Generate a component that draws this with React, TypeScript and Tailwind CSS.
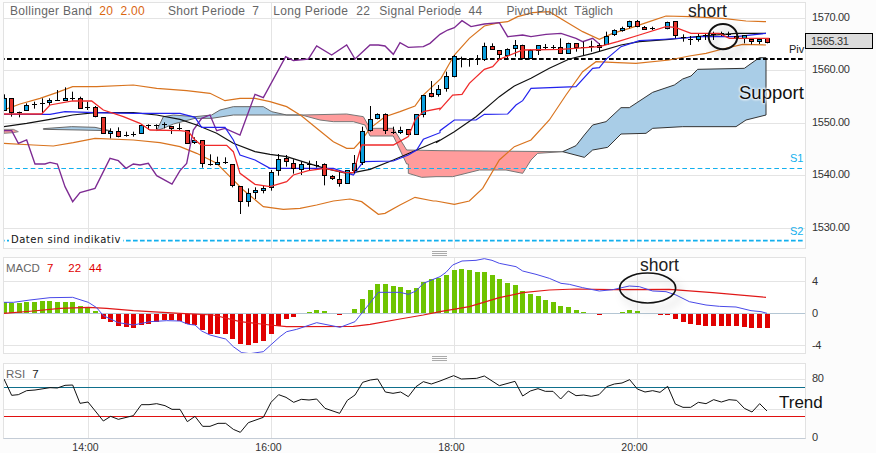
import React from "react";

const font = "font-['Liberation_Sans',Arial,sans-serif]";

// all chart coordinates are in 3x page pixels
type C = [string, number, number, number, number];

const candles: C[] = [
  ["b", 295, 330, 283, 332], ["r", 295, 338, 295, 350], ["d", 336, 336, 335, 352], ["b", 316, 332, 310, 332],
  ["d", 314, 314, 305, 326], ["d", 311, 311, 295, 340], ["b", 300, 308, 295, 315], ["d", 300, 300, 270, 302],
  ["b", 295, 302, 262, 302], ["d", 295, 295, 275, 302], ["r", 295, 325, 290, 325], ["d", 323, 323, 305, 330],
  ["r", 323, 349, 318, 352], ["r", 352, 400, 352, 400], ["b", 395, 400, 385, 415], ["r", 395, 410, 382, 412],
  ["d", 407, 407, 395, 410], ["d", 402, 402, 395, 410], ["b", 377, 400, 372, 402], ["d", 375, 375, 373, 390],
  ["d", 375, 375, 373, 388], ["d", 373, 373, 367, 385], ["r", 380, 386, 378, 402], ["d", 386, 386, 370, 390],
  ["r", 392, 430, 392, 432], ["b", 422, 428, 412, 432], ["r", 422, 490, 422, 503], ["d", 492, 492, 463, 497],
  ["b", 487, 493, 470, 495], ["d", 488, 488, 472, 492], ["r", 493, 556, 493, 562], ["r", 560, 605, 560, 642],
  ["b", 580, 604, 565, 620], ["b", 570, 577, 562, 597], ["b", 566, 572, 555, 580], ["b", 517, 563, 510, 572],
  ["b", 477, 511, 462, 527], ["r", 476, 485, 465, 500], ["r", 490, 505, 478, 521], ["b", 493, 507, 485, 525],
  ["d", 493, 493, 482, 512], ["d", 495, 495, 483, 503], ["r", 494, 526, 490, 556], ["r", 529, 535, 525, 540],
  ["r", 539, 550, 512, 560], ["b", 512, 550, 510, 552], ["b", 490, 510, 465, 520], ["b", 395, 487, 380, 495],
  ["b", 358, 392, 318, 395], ["b", 343, 356, 340, 358], ["r", 343, 392, 340, 402], ["d", 397, 397, 380, 402],
  ["b", 390, 397, 380, 402], ["r", 388, 403, 388, 405], ["b", 343, 403, 343, 403], ["b", 287, 343, 285, 352],
  ["r", 280, 290, 243, 292], ["b", 268, 284, 255, 290], ["b", 229, 265, 215, 275], ["b", 170, 228, 165, 232],
  ["d", 175, 175, 170, 202], ["d", 178, 178, 178, 200], ["d", 178, 178, 165, 195], ["b", 139, 177, 128, 183],
  ["r", 139, 149, 130, 150], ["r", 152, 163, 150, 180], ["b", 148, 167, 145, 178], ["b", 136, 146, 120, 170],
  ["r", 136, 176, 134, 177], ["b", 151, 176, 148, 177], ["b", 136, 150, 136, 165], ["d", 142, 142, 132, 150],
  ["d", 141, 141, 135, 147], ["r", 142, 160, 115, 162], ["b", 130, 161, 128, 162], ["r", 131, 143, 130, 155],
  ["d", 142, 142, 125, 165], ["d", 139, 139, 122, 155], ["b", 136, 142, 130, 155], ["b", 108, 134, 95, 135],
  ["b", 91, 103, 88, 108], ["b", 86, 92, 80, 95], ["b", 64, 80, 62, 85], ["r", 64, 79, 60, 82],
  ["r", 82, 88, 78, 90], ["d", 86, 86, 80, 90], ["", 0, 0, 0, 0], ["b", 68, 85, 65, 88],
  ["r", 64, 106, 64, 115], ["d", 113, 113, 103, 125], ["d", 117, 117, 108, 135], ["b", 110, 118, 100, 125],
  ["d", 106, 106, 100, 120], ["d", 102, 102, 95, 120], ["d", 101, 101, 95, 108], ["d", 102, 102, 95, 110],
  ["r", 110, 116, 108, 122], ["b", 107, 116, 105, 130], ["r", 118, 124, 115, 133], ["b", 117, 124, 114, 132],
  ["r", 116, 127, 114, 130],
];

const macdBars = [
  173, 175, 175, 172, 171, 170, 168, 171, 172, 173, 183, 190, 200, 222, 233, 243, 248, 250, 242, 237, 232, 227, 226,
  228, 237, 240, 255, 267, 268, 268, 282, 298, 300, 296, 288, 267, 243, 224, 216, 208, 202, 197, 200, 205, 210, 205,
  193, 162, 136, 117, 119, 124, 127, 135, 129, 113, 103, 100, 92, 75, 72, 75, 81, 81, 90, 103, 114, 120, 138, 149, 155,
  165, 172, 185, 188, 196, 201, 204, 211, 207, 204, 201, 195, 198, 204, 208, 212, 212, 222, 232, 239, 242, 244, 244,
  244, 244, 244, 246, 249, 249, 251,
];

// snap to the middle of a page pixel so 1px strokes stay crisp
const snap = (v: number) => Math.round((v - 1.5) / 3) * 3 + 1.5;
const cx = (i: number) => snap(12 + i * 22.89);

// left half is in the 0-based crop, right half is offset by 1308
const line = (a: number[], b: number[] = [], dy = 0) => {
  const out: string[] = [];
  for (let i = 0; i < a.length; i += 2) out.push(`${a[i]},${a[i + 1] + dy}`);
  for (let i = 0; i < b.length; i += 2) out.push(`${b[i] + 1308},${b[i + 1] + dy}`);
  return out.join(" ");
};

const upper = line(
  [12, 330, 60, 312, 120, 295, 170, 278, 218, 260, 290, 260, 400, 255, 470, 265, 560, 272, 630, 280, 675, 302, 720, 295, 765, 295, 810, 305, 860, 320, 905, 348, 950, 385, 1000, 425, 1040, 445, 1062, 445, 1085, 420, 1110, 385, 1155, 350, 1200, 335, 1245, 318, 1265, 290],
  [15, 235, 55, 165, 100, 115, 145, 78, 190, 68, 215, 65, 245, 50, 290, 38, 340, 35, 390, 65, 440, 95, 490, 118, 530, 100, 580, 85, 640, 65, 690, 48, 760, 50, 860, 55, 930, 63, 990, 65],
);
const lower = line(
  [12, 430, 100, 435, 160, 438, 220, 428, 285, 415, 400, 420, 480, 428, 540, 440, 590, 460, 650, 490, 695, 535, 730, 570, 790, 620, 850, 628, 900, 625, 950, 615, 1000, 603, 1050, 597, 1085, 605, 1135, 643, 1155, 640, 1200, 615, 1245, 592, 1300, 603],
  [0, 603, 55, 613, 100, 603, 140, 565, 190, 480, 235, 440, 285, 420, 340, 360, 390, 285, 440, 215, 480, 185, 545, 188, 600, 190, 700, 180, 760, 168, 810, 160, 860, 147, 920, 133, 990, 135],
);
const redLine = line(
  [12, 342, 125, 342, 150, 315, 218, 303, 275, 303, 310, 330, 370, 350, 420, 370, 450, 390, 540, 392, 565, 395, 585, 420, 605, 436, 680, 436, 700, 455, 720, 520, 765, 553, 810, 560, 860, 545, 880, 525, 925, 512, 975, 505, 1035, 518, 1060, 518, 1085, 435, 1180, 435, 1225, 410, 1245, 360, 1270, 335, 1320, 325],
  [12, 328, 50, 285, 78, 283, 100, 250, 145, 208, 170, 200, 190, 178, 260, 150, 375, 148, 490, 140, 545, 125, 610, 105, 690, 80, 718, 82, 765, 100, 850, 100, 880, 115, 925, 115, 1000, 115],
);
const blueLine = line(
  [12, 343, 150, 343, 195, 335, 285, 338, 400, 340, 540, 340, 585, 352, 605, 382, 675, 382, 700, 420, 720, 465, 765, 480, 810, 505, 1000, 505, 1060, 525, 1090, 485, 1180, 483, 1225, 465, 1250, 450, 1270, 418, 1320, 398],
  [12, 392, 55, 360, 120, 360, 145, 343, 215, 342, 240, 315, 260, 302, 285, 265, 420, 260, 470, 205, 490, 203, 510, 178, 555, 140, 610, 122, 700, 117, 800, 110, 900, 110, 990, 100],
);
const blackLine = line(
  [12, 380, 80, 370, 150, 358, 218, 345, 285, 338, 400, 338, 470, 345, 540, 358, 590, 375, 650, 400, 700, 430, 765, 455, 810, 463, 860, 470, 925, 490, 975, 505, 1040, 520, 1060, 518, 1110, 508, 1180, 480, 1250, 450, 1320, 420],
  [0, 428, 55, 395, 120, 350, 190, 290, 235, 258, 285, 235, 340, 205, 400, 177, 470, 160, 555, 135, 610, 125, 700, 118, 800, 108, 900, 100, 990, 100],
);
const purple = line(
  [12, 392, 35, 392, 55, 430, 80, 420, 105, 492, 135, 492, 150, 487, 172, 492, 195, 560, 218, 605, 240, 578, 285, 565, 330, 475, 355, 482, 378, 505, 400, 492, 420, 495, 445, 490, 470, 527, 516, 552, 540, 512, 560, 490, 580, 390, 605, 355, 630, 345, 650, 392, 675, 385, 720, 405, 765, 283, 790, 293, 857, 170, 880, 182, 925, 177, 950, 138, 995, 165, 1040, 135, 1065, 177, 1110, 135, 1135, 135, 1155, 138, 1180, 163, 1200, 128, 1225, 142, 1270, 140, 1290, 130, 1320, 103],
  [35, 90, 55, 83, 78, 62, 105, 80, 145, 72, 190, 68, 215, 110, 260, 105, 285, 110, 330, 103, 375, 100, 420, 115, 440, 125, 470, 115, 490, 132],
);

const cloudRed1 = line([12, 388, 40, 388, 55, 395, 40, 398, 12, 400]);
const cloudBlue1 = line([130, 386, 215, 380, 285, 382, 330, 392, 240, 390, 130, 388]);
const cloudBlue2 = line([470, 392, 490, 350, 520, 345, 585, 350, 635, 345, 660, 330, 700, 320, 790, 320, 815, 335, 860, 345, 905, 345, 700, 345, 635, 355, 585, 355, 520, 372, 490, 385]);
const cloudRed2 = line(
  [905, 345, 1040, 342, 1090, 350, 1110, 385, 1180, 385, 1220, 450, 1320, 452],
  [380, 455, 305, 460, 285, 480, 260, 520, 210, 510, 130, 510, 50, 530, 0, 530, -43, 532, -83, 520, -83, 492, -88, 492, -128, 408, -198, 408, -213, 375, -248, 365, -308, 365, -348, 360],
);
const cloudBig = line([], [380, 455, 420, 437, 445, 405, 470, 375, 510, 365, 555, 323, 580, 323, 650, 277, 715, 255, 740, 237, 765, 228, 785, 208, 925, 205, 970, 173, 990, 173, 990, 345, 930, 360, 900, 380, 740, 380, 650, 385, 630, 400, 555, 402, 515, 442, 470, 450, 445, 472]);

const macdBlue = line(
  [12, 172, 40, 172, 90, 165, 150, 158, 218, 157, 265, 172, 290, 188, 310, 212, 355, 233, 400, 240, 450, 230, 500, 227, 540, 228, 565, 238, 585, 240, 605, 258, 630, 270, 677, 282, 700, 305, 725, 323, 750, 326, 790, 320, 840, 275, 860, 260, 890, 253, 950, 233, 1020, 247, 1065, 230, 1105, 180, 1135, 142, 1200, 142, 1225, 148, 1248, 138, 1270, 115, 1320, 95],
  [30, 82, 50, 60, 78, 48, 120, 46, 145, 41, 168, 46, 190, 55, 240, 65, 260, 78, 300, 88, 340, 100, 375, 115, 400, 118, 440, 128, 490, 138, 530, 134, 580, 123, 610, 125, 650, 138, 690, 140, 720, 150, 760, 170, 810, 180, 850, 184, 900, 186, 945, 197, 975, 200, 993, 205],
  735,
);
const macdRed = line(
  [12, 205, 100, 198, 180, 190, 265, 187, 320, 190, 400, 197, 540, 205, 640, 210, 720, 230, 810, 240, 860, 245, 1060, 244, 1110, 238, 1200, 222, 1270, 210, 1320, 200],
  [100, 185, 190, 158, 260, 143, 340, 135, 420, 132, 530, 134, 700, 133, 830, 143, 990, 157],
  735,
);
const rsi = line(
  [12, 402, 35, 451, 55, 449, 80, 437, 105, 435, 150, 428, 172, 429, 195, 421, 218, 420, 240, 475, 264, 471, 310, 528, 332, 514, 355, 523, 400, 512, 424, 479, 447, 479, 470, 476, 495, 482, 516, 493, 540, 493, 562, 530, 585, 514, 608, 544, 630, 544, 654, 535, 677, 535, 700, 553, 721, 562, 745, 533, 790, 517, 813, 472, 836, 449, 858, 457, 881, 472, 904, 463, 927, 465, 950, 462, 975, 490, 1019, 505, 1042, 466, 1065, 450, 1088, 412, 1111, 405, 1133, 402, 1156, 441, 1179, 445, 1202, 441, 1225, 455, 1248, 425, 1270, 410, 1294, 417, 1320, 408],
  [53, 392, 76, 402, 122, 400, 145, 393, 190, 422, 237, 409, 260, 453, 283, 438, 306, 431, 328, 439, 351, 439, 374, 462, 397, 438, 420, 452, 443, 450, 466, 454, 489, 449, 512, 425, 535, 417, 558, 414, 581, 404, 604, 432, 627, 441, 650, 437, 672, 442, 695, 424, 718, 477, 741, 487, 764, 487, 787, 472, 810, 476, 833, 464, 856, 471, 879, 464, 902, 466, 925, 490, 948, 501, 971, 476, 993, 498],
  735,
);

const verticals = [265.5, 814.5, 1363.5, 1912.5];
const Grid = ({ ys, y1, y2 }: { ys: number[]; y1: number; y2: number }) => (
  <>
    {ys.map((y) => (
      <line key={y} x1={0} x2={2418} y1={y} y2={y} stroke="#e4e4e4" strokeWidth={3} />
    ))}
    {verticals.map((x) => (
      <line key={x} x1={x} x2={x} y1={y1} y2={y2} stroke="#e4e4e4" strokeWidth={3} />
    ))}
  </>
);

function Candles() {
  return (
    <g>
      {candles.map(([t, top, bottom, wt, wb], i) => {
        if (!t) return null;
        const x = cx(i);
        const y = snap(top);
        return (
          <g key={i}>
            <line x1={x} x2={x} y1={wt} y2={wb} stroke="#000" strokeWidth={3} />
            {t === "d" ? (
              <line x1={x - 7.5} x2={x + 7.5} y1={y} y2={y} stroke="#000" strokeWidth={3} />
            ) : (
              <rect
                x={x - 6}
                y={y}
                width={12}
                height={Math.max(snap(bottom) - y, 3)}
                fill={t === "b" ? "#0a9ede" : "#e5332a"}
                stroke="#000"
                strokeWidth={3}
              />
            )}
          </g>
        );
      })}
    </g>
  );
}

function PriceChart() {
  return (
    <svg viewBox="12 9 2403 735" className="block w-full h-full">
      <Grid ys={[55.5, 211.5, 370.5, 526.5, 685.5]} y1={9} y2={744} />
      <polygon points={cloudRed1} fill="#f79a9a" stroke="#888" strokeWidth={3} />
      <polygon points={cloudBlue1} fill="#a9cde7" stroke="#666" strokeWidth={3} />
      <polygon points={cloudBlue2} fill="#a9cde7" stroke="#666" strokeWidth={3} />
      <polygon points={cloudRed2} fill="#ff9c9c" stroke="#777" strokeWidth={3} />
      <polygon points={cloudBig} fill="#a9cde7" stroke="#333" strokeWidth={3} />
      <line x1={0} x2={2415} y1={177} y2={177} stroke="#000" strokeWidth={6} strokeDasharray="14 7" />
      <line x1={0} x2={2415} y1={505.5} y2={505.5} stroke="#12b0ee" strokeWidth={3} strokeDasharray="14 9" />
      <line x1={0} x2={2415} y1={722} y2={722} stroke="#12b0ee" strokeWidth={5} strokeDasharray="14 7" />
      <polyline points={upper} fill="none" stroke="#d9741f" strokeWidth={3.6} />
      <polyline points={lower} fill="none" stroke="#d9741f" strokeWidth={3.6} />
      <polyline points={purple} fill="none" stroke="#7d2a92" strokeWidth={4} />
      <polyline points={blackLine} fill="none" stroke="#111" strokeWidth={3.5} />
      <polyline points={blueLine} fill="none" stroke="#2222ee" strokeWidth={3.5} />
      <Candles />
      <polyline points={redLine} fill="none" stroke="#f02a2a" strokeWidth={3.8} />
      <ellipse cx={2169} cy={110} rx={43} ry={38} fill="none" stroke="#111" strokeWidth={6} className="drop-shadow-[15px_18px_12px_rgba(0,0,0,0.3)]" />
    </svg>
  );
}

function MacdChart() {
  return (
    <svg viewBox="12 774 2403 285" className="block w-full h-full">
      <Grid ys={[844.5, 1036.5]} y1={774} y2={1059} />
      <line x1={0} x2={2418} y1={940.5} y2={940.5} stroke="#b4c6d4" strokeWidth={3} />
      {macdBars.map((top, i) => {
        const y = snap(top + 735) - 1.5;
        const up = y < 940;
        return (
          <rect
            key={i}
            x={cx(i) - 7.5}
            y={up ? y : 942}
            width={15}
            height={up ? 939 - y : Math.max(y - 942, 0)}
            fill={up ? "#6fc400" : "#e00000"}
          />
        );
      })}
      <polyline points={macdRed} fill="none" stroke="#e01818" strokeWidth={3.5} />
      <polyline points={macdBlue} fill="none" stroke="#4a4ae8" strokeWidth={3} />
      <ellipse cx={1943} cy={864} rx={84} ry={45} fill="none" stroke="#111" strokeWidth={5} className="drop-shadow-[15px_18px_12px_rgba(0,0,0,0.25)]" />
    </svg>
  );
}

function RsiChart() {
  return (
    <svg viewBox="12 1092 2403 222" className="block w-full h-full">
      <Grid ys={[1138.5, 1228.5]} y1={1092} y2={1314} />
      <line x1={0} x2={2418} y1={1162.5} y2={1162.5} stroke="#0f6f8c" strokeWidth={3} />
      <line x1={0} x2={2418} y1={1249.5} y2={1249.5} stroke="#e01010" strokeWidth={3} />
      <polyline points={rsi} fill="none" stroke="#111" strokeWidth={3} />
    </svg>
  );
}

const Grip = ({ h }: { h: string }) => (
  <div className={`${h} w-[806px] flex justify-center items-center pl-[72px]`}>
    <div className="w-[15px] h-[5px] border-y border-[#aaa] flex items-center">
      <div className="w-full h-px bg-[#aaa]" />
    </div>
  </div>
);

const axisText = "text-[11px] tracking-[-0.3px] text-[#333]";

export default function App() {
  return (
    <div className={`${font} w-[876px] h-[453px] overflow-hidden bg-[#fcfcfc] pt-[2px] text-[#333]`}>
      {/* price */}
      <div className="flex h-[247px]">
        <div className="relative ml-[3px] w-[803px] h-[247px] bg-white border border-[#e2e2e2]">
          <PriceChart />
          <div className="absolute left-[6px] top-0 flex text-[12px] tracking-[0.3px] text-[#666] leading-[17px] whitespace-pre">
            <span>Bollinger Band</span>
            <span className="ml-[7px] text-[#d9660f]">20  2.00</span>
            <span className="ml-[23px]">Short Periode</span>
            <span className="ml-[7px]">7</span>
            <span className="ml-[14px]">Long Periode</span>
            <span className="ml-[8px]">22</span>
            <span className="ml-[9px]">Signal Periode</span>
            <span className="ml-[7px]">44</span>
            <span className="ml-[24px] tracking-normal">Pivot Punkt</span>
            <span className="ml-[7px] tracking-normal">Täglich</span>
          </div>
          <span className="absolute left-[684px] top-[-5px] text-[17.5px] text-[#222]">short</span>
          <span className="absolute left-[735px] top-[76px] text-[18.5px] text-[#111] [text-shadow:0_0_3px_#fff,0_0_3px_#fff,0_0_3px_#fff]">
            Support
          </span>
          <span className="absolute left-[785px] top-[38px] text-[11px] text-[#222]">Piv</span>
          <span className="absolute left-[786px] top-[147px] text-[11px] text-[#12b0ee]">S1</span>
          <span className="absolute left-[786px] top-[220px] text-[11px] text-[#12b0ee]">S2</span>
          <span className="absolute left-[5px] top-[231px] bg-white px-[2px] font-['DejaVu_Sans',sans-serif] text-[10px] leading-[12px] text-[#111] tracking-[0.5px]">
            Daten sind indikativ
          </span>
        </div>
        <div className={`relative w-[70px] h-[247px] pl-[6px] pt-[5px] ${axisText}`}>
          {["1570.00", "1560.00", "1550.00", "1540.00", "1530.00"].map((l) => (
            <div key={l} className="h-[20px] mb-[32.5px] flex items-center">{l}</div>
          ))}
          <div className="absolute left-[-1px] top-[31px] w-[68px] h-[16px] bg-[#dcdcdc] border border-black pl-[5px] leading-[14px]">
            1565.31
          </div>
        </div>
      </div>
      <Grip h="h-[8px]" />
      {/* macd */}
      <div className="flex h-[97px]">
        <div className="relative ml-[3px] w-[803px] h-[97px] bg-white border border-[#e2e2e2]">
          <MacdChart />
          <div className="absolute left-[2px] top-[2px] flex text-[11.5px] leading-[17px] text-[#666]">
            <span>MACD</span>
            <span className="ml-[7px] text-[#e00000]">7</span>
            <span className="ml-[15px] text-[#e00000]">22</span>
            <span className="ml-[8px] text-[#e00000]">44</span>
          </div>
          <span className="absolute left-[636px] top-[-6px] text-[17.5px] text-[#222]">short</span>
        </div>
        <div className={`w-[67px] pl-[6px] pt-[8px] ${axisText}`}>
          <div className="h-[32px] flex items-center">4</div>
          <div className="h-[32px] flex items-center">0</div>
          <div className="h-[32px] flex items-center">-4</div>
        </div>
      </div>
      <Grip h="h-[9px]" />
      {/* rsi */}
      <div className="flex h-[76px]">
        <div className="relative ml-[3px] w-[803px] h-[76px] bg-white border border-[#e2e2e2] border-b-[#c4ccd6]">
          <RsiChart />
          <div className="absolute left-[2px] top-[2px] flex text-[11.5px] leading-[17px] text-[#666]">
            <span>RSI</span>
            <span className="ml-[7px] text-[#222]">7</span>
          </div>
          <span className="absolute left-[775px] top-[26px] text-[17px] text-[#111] z-10">Trend</span>
        </div>
        <div className={`w-[67px] pl-[6px] pt-[8px] h-[81px] flex flex-col justify-between leading-[14px] ${axisText}`}>
          <span>80</span>
          <span>0</span>
        </div>
      </div>
      {/* time axis */}
      <div className="flex ml-[3px] w-[803px] text-[10.5px] leading-[14px] mt-[1px] text-[#333]">
        {["14:00", "16:00", "18:00", "20:00"].map((t, i) => (
          <span key={t} className={`w-[183px] shrink-0 text-center ${i === 0 ? "ml-[-9px]" : ""}`}>{t}</span>
        ))}
      </div>
    </div>
  );
}
